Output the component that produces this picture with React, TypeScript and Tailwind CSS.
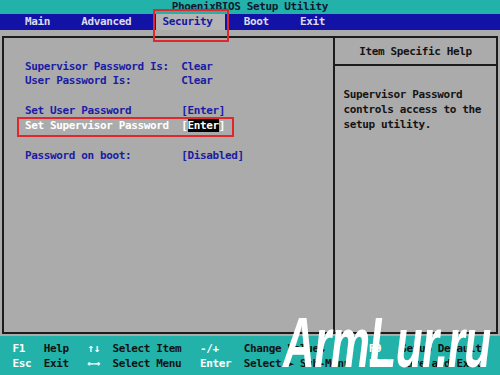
const mono =
  "font-['DejaVu_Sans_Mono','Liberation_Mono',monospace] text-[11px] font-bold tracking-[-0.372px]";
const row = "h-[14.86px] leading-[14.86px] whitespace-pre";

function Key({ children }: { children: string }) {
  return <span className="text-white">{children}</span>;
}

export default function App() {
  return (
    <div className={`relative w-[500px] h-[375px] overflow-hidden bg-[#ababab] flex flex-col ${mono}`}>
      {/* title */}
      <div className={`h-[14px] bg-[#22b2aa] text-[#0e1830] text-center ${row}`}>
        PhoenixBIOS Setup Utility
      </div>

      {/* menu bar */}
      <div className={`h-[16px] bg-[#1212a6] text-[#dcdcec] leading-[16px] whitespace-pre`}>
        {"    Main     Advanced    "}
        <span className="inline-block h-[16px] bg-[#b4b4b4] text-[#1818a0]">{" Security  "}</span>
        {"   Boot     Exit"}
      </div>

      {/* main area */}
      <div className="flex-1 px-[2px] pt-[6px] pb-[2px]">
        <div className="h-[298px] border-2 border-[#1c1c1c] flex">
          {/* left pane */}
          <div className="w-[329px] pl-[21px] pt-[21.5px] text-[#1c1ca2]">
            <div className={row}>{"Supervisor Password Is:  Clear"}</div>
            <div className={row}>{"User Password Is:        Clear"}</div>
            <div className={row}> </div>
            <div className={row}>{"Set User Password        [Enter]"}</div>
            <div className={`${row} text-white`}>
              {"Set Supervisor Password  ["}
              <span className="bg-black">Enter</span>
              {"]"}
            </div>
            <div className={row}> </div>
            <div className={row}>{"Password on boot:        [Disabled]"}</div>
          </div>

          {/* right pane */}
          <div className="flex-1 border-l-2 border-[#1c1c1c] flex flex-col text-[#141414]">
            <div className="h-[28px] pt-[6.7px] border-b-2 border-[#1c1c1c]">
              <div className={`${row} text-center`}>Item Specific Help</div>
            </div>
            <div className="pl-[8.5px] pt-[22px]">
              <div className={row}>Supervisor Password</div>
              <div className={row}>controls access to the</div>
              <div className={row}>setup utility.</div>
            </div>
          </div>
        </div>
      </div>

      {/* key help bar */}
      <div className="h-[39px] bg-[#22b2aa] pt-[6px] text-[#121212]">
        <div className={row}>
          {"  "}<Key>F1</Key>{"   Help   "}<Key>↑↓</Key>{"  Select Item   "}<Key>-/+</Key>
          {"    Change Values       "}<Key>F9</Key>{"   Setup Defaults"}
        </div>
        <div className={row}>
          {"  "}<Key>Esc</Key>{"  Exit   "}<Key>←→</Key>{"  Select Menu   "}<Key>Enter</Key>
          {"  Select ► Sub-Menu   "}<Key>F10</Key>{"  Save and Exit"}
        </div>
      </div>

      {/* annotation boxes */}
      <div className="absolute left-[153px] top-[9px] w-[76px] h-[33px] border-2 border-[#e3262b]" />
      <div className="absolute left-[17px] top-[117px] w-[217px] h-[20px] border-2 border-[#e3262b]" />

      {/* watermark */}
      <div className="absolute left-[283px] top-[308px] origin-left scale-x-[0.63] whitespace-nowrap text-white italic font-bold text-[70px] leading-none tracking-[-1px] font-['Liberation_Sans',sans-serif]">
        ArmLur.ru
      </div>
    </div>
  );
}
